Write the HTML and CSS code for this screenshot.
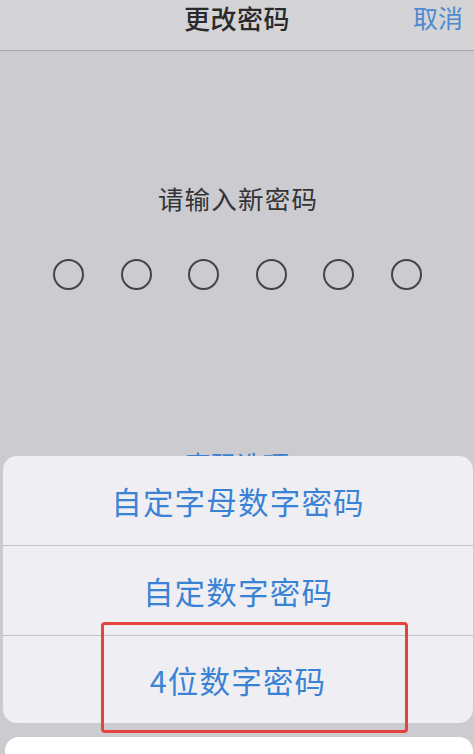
FILE: index.html
```html
<!DOCTYPE html>
<html lang="zh-CN">
<head>
<meta charset="utf-8">
<title>更改密码</title>
<link rel="stylesheet" href="styles.css">
</head>
<body>
<div class="screen">
  <header class="nav">
    <div class="nav-side"></div>
    <div class="nav-title">更改密码</div>
    <div class="nav-side nav-right"><span class="nav-cancel">取消</span></div>
  </header>
  <main class="content">
    <div class="prompt">请输入新密码</div>
    <div class="dots">
      <span class="dot"></span><span class="dot"></span><span class="dot"></span>
      <span class="dot"></span><span class="dot"></span><span class="dot"></span>
    </div>
    <div class="options-link">密码选项</div>
  </main>
  <div class="sheet-layer">
    <div class="sheet">
      <div class="sheet-row">自定字母数字密码</div>
      <div class="sheet-row">自定数字密码</div>
      <div class="sheet-row">4位数字密码</div>
    </div>
    <div class="sheet-cancel"></div>
  </div>
  <div class="highlight"></div>
</div>
</body>
</html>
```
FILE: styles.css
```css
html, body {
  margin: 0;
  padding: 0;
}
body {
  width: 474px;
  height: 754px;
  overflow: hidden;
  background: #cbcbd0;
  font-family: "Noto Sans CJK SC", "Noto Sans", sans-serif;
}
.screen {
  position: relative;
  width: 474px;
  height: 754px;
  overflow: hidden;
  background: #cbcbd0;
}
.nav {
  height: 51px;
  box-sizing: border-box;
  background: #d4d4d7;
  border-bottom: 1px solid #a8a8ac;
  display: grid;
  grid-template-columns: 1fr auto 1fr;
  align-items: start;
  padding-top: 1px;
}
.nav-title {
  font-size: 26px;
  line-height: 33px;
  font-weight: 500;
  color: #2a2a2c;
  letter-spacing: 0.5px;
}
.nav-right {
  display: flex;
  justify-content: flex-end;
  padding-right: 11px;
}
.nav-cancel {
  font-size: 25px;
  line-height: 33px;
  color: #4f8ad0;
}
.content {
  display: flex;
  flex-direction: column;
  align-items: center;
}
.prompt {
  margin-top: 130px;
  font-size: 25.5px;
  line-height: 34px;
  color: #333336;
  letter-spacing: 1.2px;
  padding-left: 2px;
}
.dots {
  margin-top: 44px;
  display: flex;
  gap: 36.6px;
  padding-left: 1px;
}
.dot {
  width: 27px;
  height: 27px;
  border: 2px solid #444447;
  border-radius: 50%;
  display: block;
}
.options-link {
  margin-top: 157px;
  font-size: 26px;
  line-height: 34px;
  color: #3b7fd0;
}
.sheet-layer {
  position: absolute;
  left: 0;
  right: 0;
  top: 456px;
  display: flex;
  flex-direction: column;
  gap: 14px;
}
.sheet {
  margin: 0 1px 0 3px;
  background: #efeff3;
  border-radius: 14px;
  display: flex;
  flex-direction: column;
  overflow: hidden;
}
.sheet-row {
  height: 89px;
  display: flex;
  align-items: center;
  justify-content: center;
  font-size: 30.5px;
  color: #3a83d4;
  letter-spacing: 1.2px;
}
.sheet-row + .sheet-row {
  border-top: 1px solid #c4c4c9;
}
.sheet-row:last-child {
  height: 87px;
}
.sheet-cancel {
  margin: 0 1px 0 5px;
  height: 60px;
  background: #ffffff;
  border-radius: 14px;
}
.highlight {
  position: absolute;
  left: 101px;
  top: 622px;
  width: 301px;
  height: 105px;
  border: 3px solid #e5433f;
  border-radius: 4px;
}
```
